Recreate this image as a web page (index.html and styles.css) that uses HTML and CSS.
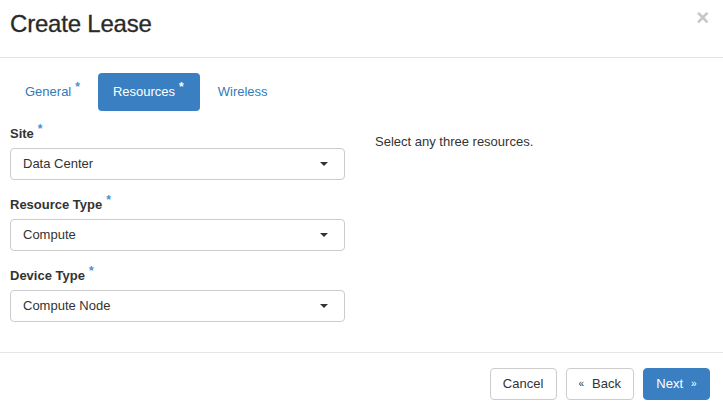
FILE: index.html
```html
<!DOCTYPE html>
<html>
<head>
<meta charset="utf-8">
<link rel="stylesheet" href="styles.css">
</head>
<body>
<div class="modal">
  <div class="modal-header">
    <h3 class="modal-title">Create Lease</h3>
    <span class="close">&times;</span>
  </div>
  <ul class="nav-pills">
    <li><a class="pill">General<span class="req">*</span></a></li>
    <li><a class="pill active">Resources<span class="req">*</span></a></li>
    <li><a class="pill">Wireless</a></li>
  </ul>
  <div class="modal-body">
    <div class="col-left">
      <div class="form-group">
        <label class="control-label">Site<span class="req">*</span></label>
        <div class="select"><span>Data Center</span><span class="caret"></span></div>
      </div>
      <div class="form-group">
        <label class="control-label">Resource Type<span class="req">*</span></label>
        <div class="select"><span>Compute</span><span class="caret"></span></div>
      </div>
      <div class="form-group">
        <label class="control-label">Device Type<span class="req">*</span></label>
        <div class="select"><span>Compute Node</span><span class="caret"></span></div>
      </div>
    </div>
    <div class="col-right">
      <p class="help">Select any three resources.</p>
    </div>
  </div>
  <div class="modal-footer">
    <button class="btn">Cancel</button>
    <button class="btn"><span class="raquo">&laquo;</span>Back</button>
    <button class="btn btn-primary">Next<span class="raquo right">&raquo;</span></button>
  </div>
</div>
</body>
</html>
```

FILE: styles.css
```css
* { box-sizing: border-box; }
html, body { margin: 0; padding: 0; background: #fff; }
body {
  font-family: "Liberation Sans", Arial, Helvetica, sans-serif;
  font-size: 13px;
  line-height: 18px;
  color: #333;
}
.modal { width: 723px; height: 412px; background: #fff; }
.modal-header {
  height: 58px;
  padding: 11px 14px 0 10px;
  border-bottom: 1px solid #e5e5e5;
  display: flex;
  justify-content: space-between;
  align-items: flex-start;
}
.modal-title {
  margin: 0;
  font-size: 24px;
  line-height: 26px;
  font-weight: 500;
  color: #2a2a2a;
  letter-spacing: -0.2px;
  -webkit-text-stroke: 0.3px #2a2a2a;
}
.close {
  font-size: 22px;
  font-weight: bold;
  line-height: 18px;
  color: #c6c6c6;
  margin-top: -2px;
}
.nav-pills {
  list-style: none;
  margin: 15px 0 0 0;
  padding: 0 10px;
  display: flex;
  gap: 2px;
}
.pill {
  display: block;
  padding: 10px 15px;
  line-height: 18px;
  border-radius: 4px;
  color: #337ab7;
}
.pill.active { background: #3a7fc2; color: #fff; }
.pill.active .req { color: #fff; }
.req {
  color: #4a90d2;
  font-size: 12px;
  font-weight: bold;
  position: relative;
  top: -5px;
  margin: 0 1px 0 4px;
}
.nav-pills li:nth-child(3) .pill { margin-left: 1px; }
.modal-body {
  display: grid;
  grid-template-columns: 335px 1fr;
  column-gap: 30px;
  padding: 14px 10px 15px 10px;
  border-bottom: 1px solid #e5e5e5;
}
.form-group { margin-bottom: 16px; }
.form-group:last-child { margin-bottom: 15px; }
.control-label {
  display: block;
  font-weight: bold;
  margin-bottom: 5px;
  color: #333;
}
.select {
  height: 32px;
  border: 1px solid #ccc;
  border-radius: 4px;
  padding: 6px 16px 6px 12px;
  display: flex;
  justify-content: space-between;
  align-items: center;
  color: #333;
}
.caret {
  width: 0;
  height: 0;
  border-left: 4px solid transparent;
  border-right: 4px solid transparent;
  border-top: 4px solid #333;
}
.help { margin: 8px 0 0 0; }
.modal-footer {
  display: flex;
  justify-content: flex-end;
  gap: 9px;
  padding: 15px 13px 0 0;
}
.btn {
  font-family: inherit;
  font-size: 13px;
  line-height: 18px;
  height: 32px;
  padding: 6px 12px;
  background: #fff;
  border: 1px solid #ccc;
  border-radius: 4px;
  color: #333;
  min-width: 67px;
}
.btn-primary { background: #3a7fc2; border-color: #3a7fc2; color: #fff; }
.raquo { font-size: 10px; margin-right: 8px; position: relative; top: -1px; }
.raquo.right { margin-right: 0; margin-left: 8px; }
```
